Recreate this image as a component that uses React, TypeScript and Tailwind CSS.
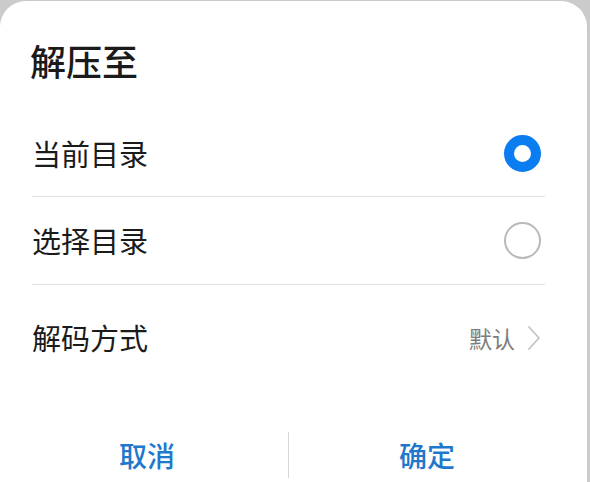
import React, { useState } from 'react';

const font = { fontFamily: '"Noto Sans CJK SC", "Noto Sans", sans-serif' };

export default function App() {
  const [choice, setChoice] = useState<'current' | 'pick'>('current');

  return (
    <div className="w-[590px] h-[482px] bg-[#cbcbcb] pt-[1px] overflow-hidden" style={font}>
      <div className="w-[587px] h-[481px] bg-white rounded-t-[26px] flex flex-col">
        <div className="h-[110px] pl-[30px] pt-[40px]">
          <h2 className="text-[36px] leading-[38px] font-medium text-[#1b1b1b]">解压至</h2>
        </div>

        <div className="ml-[32px] mr-[42px]">
          <OptionRow
            label="当前目录"
            selected={choice === 'current'}
            onSelect={() => setChoice('current')}
            className="h-[86px]"
          />
          <OptionRow
            label="选择目录"
            selected={choice === 'pick'}
            onSelect={() => setChoice('pick')}
            className="h-[88px]"
          />
          <div className="h-[106px] flex items-center justify-between">
            <span className="text-[29px] text-[#1b1b1b]">解码方式</span>
            <div className="flex items-center gap-[12px] pr-[4px]">
              <span className="text-[23px] text-[#7c7c7c]">默认</span>
              <svg width="14" height="26" viewBox="0 0 14 26" fill="none">
                <path d="M2 2 L12 13 L2 24" stroke="#c4c4c4" strokeWidth="1.8" strokeLinecap="round" strokeLinejoin="round" />
              </svg>
            </div>
          </div>
        </div>

        <div className="mt-[41px] h-[46px] flex items-center">
          <button className="w-[288px] h-full flex items-center justify-center pl-[6px] text-[28px] font-medium text-[#1f78cc]">
            取消
          </button>
          <div className="w-px h-full bg-[#d6d6d6]" />
          <button className="flex-1 h-full flex items-center justify-center pr-[22px] text-[28px] font-medium text-[#1f78cc]">
            确定
          </button>
        </div>
      </div>
    </div>
  );
}

function OptionRow({
  label,
  selected,
  onSelect,
  className,
}: {
  label: string;
  selected: boolean;
  onSelect: () => void;
  className: string;
}) {
  return (
    <div
      className={`flex items-center justify-between border-b border-[#e2e2e2] ${className}`}
      onClick={onSelect}
    >
      <span className="text-[29px] text-[#1b1b1b]">{label}</span>
      <span
        className={
          selected
            ? 'mr-[4px] w-[37px] h-[37px] rounded-full border-[10px] border-[#0a7ef0]'
            : 'mr-[4px] w-[37px] h-[37px] rounded-full border-2 border-[#b9b9b9]'
        }
      />
    </div>
  );
}
